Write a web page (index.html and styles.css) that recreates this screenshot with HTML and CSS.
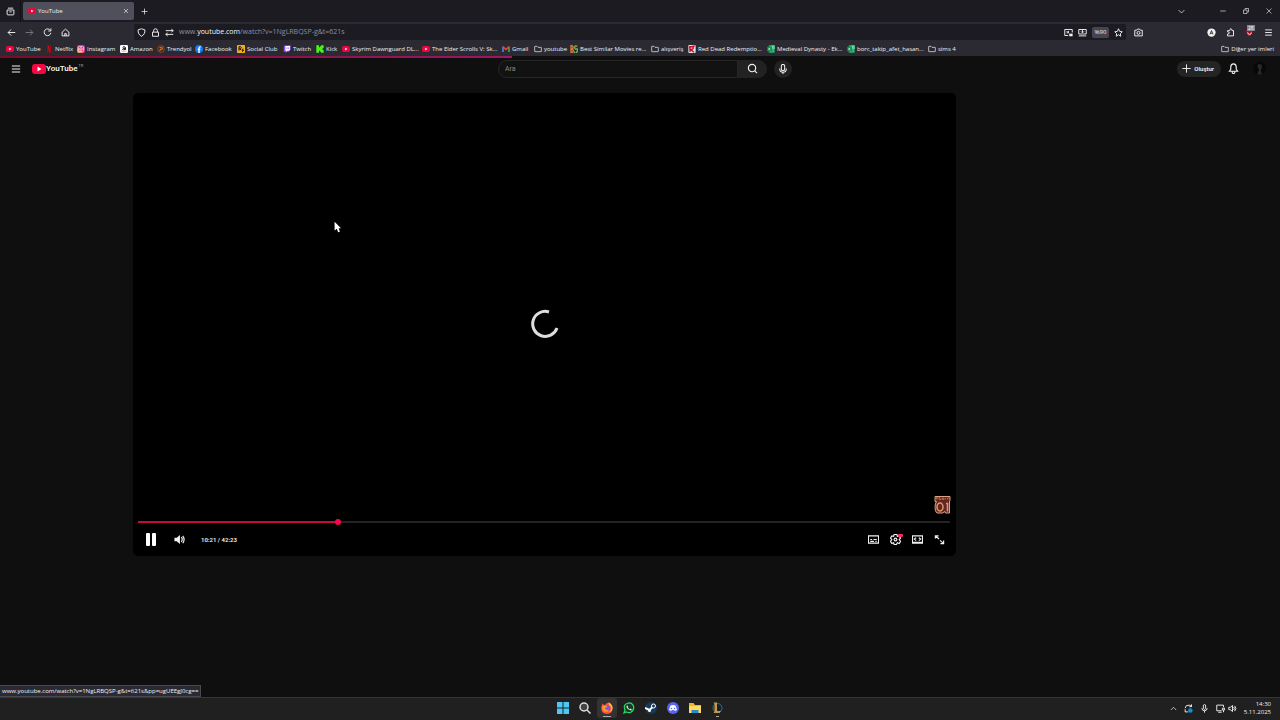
FILE: index.html
```html
<!DOCTYPE html>
<html lang="tr">
<head>
<meta charset="utf-8">
<title>YouTube</title>
<link rel="stylesheet" href="styles.css">
</head>
<body>
<svg class="sprite" aria-hidden="true">
  <symbol id="yt" viewBox="0 0 24 24"><rect y="3" width="24" height="18" rx="5" fill="#e4093c"/><path d="M9.500 8l7 4-7 4z" fill="#fff"/></symbol>
  <symbol id="folder" viewBox="0 0 24 24"><path d="M2 19V5q0-1 1-1h6l3 3h9q1 0 1 1v11q0 1-1 1H3q-1 0-1-1z" fill="none" stroke="#e8e8ee" stroke-width="2.200"/></symbol>
  <symbol id="sheet" viewBox="0 0 24 24"><rect x="5" y="1" width="18" height="22" rx="2" fill="#25b56f"/><path d="M14 1h9v11h-9z" fill="#58d99a"/><rect y="5" width="14" height="14" rx="1" fill="#087a42"/><path d="M4 8l6 8M10 8l-6 8" stroke="#fff" stroke-width="2"/></symbol>
</svg>
<div class="screen">
  <header class="browser">
    <div class="tabstrip">
      <button class="view" aria-label="Firefox View"><svg class="i9" viewBox="0 0 24 24"><path d="M3 8h18v11q0 2-2 2H5q-2 0-2-2zM5 3h14M9 13h6"/></svg></button>
      <div class="tab"><svg class="fav"><use href="#yt"/></svg><span>YouTube</span><button aria-label="Sekmeyi kapat"><svg class="i6" viewBox="0 0 24 24"><path d="M4 4l16 16M20 4L4 20"/></svg></button></div>
      <button class="plus" aria-label="Yeni sekme"><svg class="i7" viewBox="0 0 24 24"><path d="M12 2v20M2 12h20"/></svg></button>
      <div class="winctl">
        <button aria-label="Sekmeler"><svg class="i7" viewBox="0 0 24 24"><path d="M2 7l10 10L22 7"/></svg></button>
        <button aria-label="Küçült"><svg class="i6" viewBox="0 0 24 24"><path d="M1 12h22"/></svg></button>
        <button aria-label="Geri yükle"><svg class="i6" viewBox="0 0 24 24"><path d="M2 8h14v14H2zM8 7V2h14v14h-5"/></svg></button>
        <button aria-label="Kapat"><svg class="i6" viewBox="0 0 24 24"><path d="M2 2l20 20M22 2L2 22"/></svg></button>
      </div>
    </div>
    <div class="toolbar">
      <nav class="nav">
        <button aria-label="Geri"><svg class="i9" viewBox="0 0 24 24"><path d="M22 12H3M11 4l-8 8 8 8"/></svg></button>
        <button class="dim" aria-label="İleri"><svg class="i9" viewBox="0 0 24 24"><path d="M2 12h19M13 4l8 8-8 8"/></svg></button>
        <button aria-label="Yenile"><svg class="i9" viewBox="0 0 24 24"><path d="M20 7a9 9 0 1 0 1 6M21 1v7h-7"/></svg></button>
        <button aria-label="Ana sayfa"><svg class="i9" viewBox="0 0 24 24"><path d="M3 11l9-8 9 8v10H3zM10 21v-6h4v6"/></svg></button>
      </nav>
      <div class="urlbar">
        <svg class="i9" viewBox="0 0 24 24"><path d="M12 2l9 3q1 12-9 17Q2 17 3 5z"/></svg>
        <svg class="i9" viewBox="0 0 24 24"><path d="M4 11h16v11H4zM7 11V7q0-5 5-5t5 5v4"/></svg>
        <svg class="i9" viewBox="0 0 24 24"><path d="M2 7h20M2 17h20M17 3l5 4-5 4M7 13l-5 4 5 4"/></svg>
        <div class="url" role="textbox" aria-label="Adres">www.<b>youtube.com</b>/watch?v=1NgLRBQSP-g&amp;t=621s</div>
        <div class="urlacts">
        <button aria-label="Görüntü içinde görüntü"><svg class="i9" viewBox="0 0 24 24"><path d="M11 20H2V4h20v8M7 8l5 5M12 8v5H7"/><path class="fill" d="M14 15h9v7h-9z"/></svg></button>
        <button aria-label="Yükle"><svg class="i9" viewBox="0 0 24 24"><path d="M2 4h20v12H2zM2 21h20M12 4v8M8 9l4 4 4-4"/></svg></button>
        <button class="zoom">%90</button>
        <button aria-label="Yer imi"><svg class="i9" viewBox="0 0 24 24"><path d="M12 2l3 7 7 1-5 5 1 7-6-4-6 4 1-7-5-5 7-1z"/></svg></button>
        </div>
      </div>
      <button class="camera" aria-label="Ekran görüntüsü"><svg class="i9" viewBox="0 0 24 24"><path d="M2 6h5l2-3h6l2 3h5v15H2z"/><circle cx="12" cy="13" r="4"/></svg></button>
      <div class="ext">
        <button aria-label="Hesap"><svg class="i9" viewBox="0 0 24 24"><circle class="fill" cx="12" cy="12" r="11"/><path d="M8 17l4-10 4 10M10 14h4" class="dark"/></svg></button>
        <button aria-label="Uzantılar"><svg class="i9" viewBox="0 0 24 24"><path d="M4 21v-5q5 0 5-3t-5-3V7h6q0-5 3-5t3 5h4v14z"/></svg></button>
        <button class="blocker" aria-label="Engelleyici"><svg class="i9" viewBox="0 0 24 24"><path d="M3 4q9 0 9-3 0 3 9 3 0 14-9 19Q3 18 3 4z" fill="#b10f25" stroke="none"/><path d="M7 12q0 5 5 5t5-5"/></svg><span class="count">28</span></button>
        <button aria-label="Menü"><svg class="i9" viewBox="0 0 24 24"><path d="M3 5h18M3 12h18M3 19h18"/></svg></button>
      </div>
    </div>
    <nav class="bookmarks">
      <a href="#"><svg><use href="#yt"/></svg>YouTube</a>
      <a href="#"><svg viewBox="0 0 24 24"><path d="M6 1h5l7 22h-5z" fill="#e50914"/><path d="M6 1h4v22H6zM14 1h4v22h-4z" fill="#a00712"/></svg>Netflix</a>
      <a href="#"><svg viewBox="0 0 24 24"><defs><linearGradient id="ig" x1="0" y1="1" x2="1" y2="0"><stop offset="0" stop-color="#ffc43d"/><stop offset=".5" stop-color="#ed2b67"/><stop offset="1" stop-color="#8b37e8"/></linearGradient></defs><rect width="24" height="24" rx="6" fill="url(#ig)"/><g fill="none" stroke="#fff" stroke-width="2"><rect x="4" y="4" width="16" height="16" rx="4"/><circle cx="12" cy="12" r="4"/></g></svg>Instagram</a>
      <a href="#"><svg viewBox="0 0 24 24"><rect width="24" height="24" rx="4" fill="#fff"/><path d="M8 7q4-4 8 0v8M16 10q-8-1-8 3t8 0" fill="none" stroke="#111" stroke-width="3"/><path d="M4 18q8 5 16 0" fill="none" stroke="#f59b21" stroke-width="2"/></svg>Amazon</a>
      <a href="#"><svg viewBox="0 0 24 24"><circle cx="12" cy="12" r="10" fill="#32251f" stroke="#c55525" stroke-width="2"/><path d="M8 8h8v5H9v5" fill="none" stroke="#f27a1a" stroke-width="3"/></svg>Trendyol</a>
      <a href="#"><svg viewBox="0 0 24 24"><circle cx="12" cy="12" r="12" fill="#1478f2"/><path d="M17 6q-5-1-5 4v14M8 13h8" fill="none" stroke="#fff" stroke-width="4"/></svg>Facebook</a>
      <a href="#"><svg viewBox="0 0 24 24"><rect width="24" height="24" rx="2" fill="#f5ae17"/><path d="M6 17V5h5q4 3 0 6H7l6 4M18 11l-2 5h4l-5 4" fill="none" stroke="#161616" stroke-width="3"/></svg>Social Club</a>
      <a href="#"><svg viewBox="0 0 24 24"><path d="M5 1h18v14l-6 5h-5l-4 4v-4H2V6z" fill="#9146ff"/><path d="M7 3h14v11l-4 3h-5l-3 3v-3H7z" fill="#fff"/><path d="M12 7v5M17 7v5" stroke="#9146ff" stroke-width="2"/></svg>Twitch</a>
      <a href="#"><svg viewBox="0 0 24 24"><path d="M1 1h8v6h3V4h3V1h8v8h-3v6h3v8h-8v-3h-3v-3H9v6H1z" fill="#45f516"/></svg>Kick</a>
      <a href="#"><svg><use href="#yt"/></svg>Skyrim Dawnguard DL...</a>
      <a href="#"><svg><use href="#yt"/></svg>The Elder Scrolls V: Sk...</a>
      <a href="#"><svg viewBox="0 0 24 24"><path d="M3 21V5" stroke="#4285f4" stroke-width="5"/><path d="M21 21V5" stroke="#34a853" stroke-width="5"/><path d="M2 5l10 8 10-8" fill="none" stroke="#ea4335" stroke-width="5"/></svg>Gmail</a>
      <a href="#"><svg><use href="#folder"/></svg>youtube</a>
      <a href="#"><svg viewBox="0 0 24 24"><path d="M3 2v20h3q5-1 4-5t-6-5q7-1 5-6T3 2z" fill="none" stroke="#e8793e" stroke-width="4"/><path d="M22 4q-8-4-8 3t6 5 1 8-8 0" fill="none" stroke="#79b84d" stroke-width="4"/></svg>Best Similar Movies re...</a>
      <a href="#"><svg><use href="#folder"/></svg>alışveriş</a>
      <a href="#"><svg viewBox="0 0 24 24"><rect x="1" width="22" height="24" rx="3" fill="#e9dede"/><path d="M6 21V5h8q5 5-2 8H7l11 9M3 7l17-4" fill="none" stroke="#c30d35" stroke-width="4"/></svg>Red Dead Redemptio...</a>
      <a href="#"><svg><use href="#sheet"/></svg>Medieval Dynasty - Ek...</a>
      <a href="#"><svg><use href="#sheet"/></svg>borc_takip_afet_hasan...</a>
      <a href="#"><svg><use href="#folder"/></svg>sims 4</a>
      <a class="other" href="#"><svg><use href="#folder"/></svg>Diğer yer imleri</a>
    </nav>
  </header>
  <div class="loading"><div></div></div>
  <div class="masthead">
    <div class="brand">
      <button aria-label="Menü"><svg class="i10" viewBox="0 0 24 24"><path d="M2 5h20M2 12h20M2 19h20"/></svg></button>
      <a class="logo" href="#"><svg viewBox="0 0 28 20"><rect width="28" height="20" rx="6" fill="#f5083f"/><path d="M11 5l8 5-8 5z" fill="#fff"/></svg><b>YouTube</b><sup>TR</sup></a>
    </div>
    <form class="search">
      <input type="text" placeholder="Ara" aria-label="Ara">
      <button type="button" class="go" aria-label="Ara"><svg class="i11" viewBox="0 0 24 24"><circle cx="11" cy="11" r="8"/><path d="M17 17l5 5"/></svg></button>
      <button type="button" class="mic" aria-label="Sesle ara"><svg class="i10" viewBox="0 0 24 24"><path d="M8 5q0-4 4-4t4 4v7q0 4-4 4t-4-4zM4 11q0 9 8 9t8-9M12 20v4"/></svg></button>
    </form>
    <div class="account">
      <button class="create"><svg class="i9" viewBox="0 0 24 24"><path d="M12 1v22M1 12h22"/></svg>Oluştur</button>
      <button class="bell" aria-label="Bildirimler"><svg class="i11" viewBox="0 0 24 24"><path d="M3 18l3-4V9q0-7 6-7t6 7v5l3 4zM9 19q0 4 3 4t3-4"/></svg></button>
      <button aria-label="Profil"><svg class="avatar" viewBox="0 0 24 24"><circle cx="12" cy="12" r="12" fill="#080808"/><path d="M8 8q1-6 6-4 4 2 2 8l-2 3 3 8H8l3-9z" fill="#292929"/></svg></button>
    </div>
  </div>
  <main class="page">
    <section class="player">
      <div class="stage">
        <svg class="spinner" viewBox="0 0 30 30"><path d="M19 3A12.500 12.500 0 1 0 27 19"/></svg>
        <svg class="mark" viewBox="0 0 34 38"><path d="M2 3h30v8l-1 1v24h-8l-1-3-5 3H6q-4-3-4-11 0-8 3-12H2z" fill="#63271f" stroke="#dfa083" stroke-width="2"/><path d="M5 9V5h3v4M11 4v5h3V6M17 9V6h3v3zM23 9V6M27 9V6h3" stroke="#d99b7f" stroke-width="1"/><ellipse cx="12" cy="24" rx="6" ry="8" stroke="#dc9770" stroke-width="3"/><path d="M24 17h3v16" stroke="#dc9770" stroke-width="3"/></svg>
      </div>
      <input class="seek" type="range" min="0" max="2543" value="621" aria-label="Konum">
      <div class="controls">
        <button aria-label="Duraklat"><svg class="pause" viewBox="0 0 20 26"><rect width="8" height="26" rx="2"/><rect x="12" width="8" height="26" rx="2"/></svg></button>
        <button aria-label="Ses"><svg class="i11" viewBox="0 0 24 24"><path class="fill" d="M1 8h5l7-6v20l-7-6H1z"/><path d="M16 7q4 5 0 10M19 4q6 8 0 16"/></svg></button>
        <time>10:21 / 42:23</time>
        <div class="right">
          <button aria-label="Altyazılar"><svg class="i11" viewBox="0 0 24 24"><path d="M1 4h22v16H1zM5 12h4M12 12h7M5 16h8M16 16h3"/></svg></button>
          <button class="gear" aria-label="Ayarlar"><svg class="i11" viewBox="0 0 24 24"><path d="M9 1h6l1 4 4-1 3 5-3 3 3 4-3 5-4-2-2 4H9l-1-4-4 2-3-5 3-4-3-3 3-5 4 1z"/><circle cx="12" cy="12" r="3"/></svg><span class="hd"></span></button>
          <button aria-label="Sinema modu"><svg class="i11" viewBox="0 0 24 24"><path d="M1 4h22v16H1zM9 8l-4 3 4 3M15 8l4 3-4 3M1 18h22"/></svg></button>
          <button aria-label="Tam ekran"><svg class="i11" viewBox="0 0 24 24"><path d="M3 10V4h7M4 5l7 6M21 14v7h-7M20 20l-7-6"/></svg></button>
        </div>
      </div>
    </section>
    <div class="status">www.youtube.com/watch?v=1NgLRBQSP-g&amp;t=621s&amp;pp=ugUEEgJ0cg==</div>
    <svg class="cursor" viewBox="0 0 12 20"><path d="M1 1v15l4-3 2 6 3-1-2-6h4z" fill="#fff"/></svg>
  </main>
  <footer class="taskbar">
    <div class="apps">
      <button aria-label="Başlat"><svg viewBox="0 0 24 24"><path d="M0 0h11v11H0zM13 0h11v11H13zM0 13h11v11H0zM13 13h11v11H13z" fill="#4bc8f5"/></svg></button>
      <button aria-label="Arama"><svg viewBox="0 0 24 24"><circle cx="10" cy="10" r="8" fill="#444" stroke="#ddd" stroke-width="3"/><path d="M16 16l7 7" stroke="#ddd" stroke-width="3"/></svg></button>
      <button class="active" aria-label="Firefox"><svg viewBox="0 0 24 24"><path d="M1 9l2-6 4 4q4-6 9-6 1 4 4 6l2 1q4 15-10 16Q-1 24 1 9z" fill="#ff5138"/><path d="M15 1q0 5 4 7 4 8-4 12 9-1 8-10-1-5-4-7" fill="#ffc83b"/><circle cx="12" cy="13" r="6" fill="#8453df"/><path d="M3 8q6-3 10 2-5 0-5 3 2 4 8 3-4 6-10 3Q1 15 3 8z" fill="#ff9833"/></svg></button>
      <button aria-label="WhatsApp"><svg viewBox="0 0 24 24"><path d="M2 22l2-6Q0 6 8 3q9-4 13 5 2 9-6 13-4 1-8-1z" fill="#173b25" stroke="#27d867" stroke-width="2.500"/><path d="M8 7q-3 3 2 7t8 2l-3-3-2 2-4-5 1-2z" fill="#fff"/></svg></button>
      <button aria-label="Steam"><svg viewBox="0 0 24 24"><circle cx="12" cy="12" r="12" fill="#153957"/><path d="M0 12l9 4 6-6" fill="none" stroke="#fff" stroke-width="4"/><circle cx="17" cy="8" r="4" fill="#153957" stroke="#fff" stroke-width="2"/><circle cx="9" cy="17" r="3" fill="#fff"/></svg></button>
      <button aria-label="Discord"><svg viewBox="0 0 24 24"><circle cx="12" cy="12" r="12" fill="#5865f2"/><path d="M7 7q5-2 10 0l3 9-4 2-2-2h-4l-2 2-4-2z" fill="#fff"/><circle cx="9" cy="13" r="1.500" fill="#5865f2"/><circle cx="15" cy="13" r="1.500" fill="#5865f2"/></svg></button>
      <button aria-label="Dosyalar"><svg viewBox="0 0 24 24"><path d="M0 2h9l3 4h12v16H0z" fill="#efb51c"/><path d="M0 8h24v14H0z" fill="#ffda61"/><path d="M5 22v-6h14v6" fill="#278ac9"/></svg></button>
      <button class="running" aria-label="League of Legends"><svg viewBox="0 0 24 24"><circle cx="13" cy="12" r="9" fill="#10242a" stroke="#436c78" stroke-width="2"/><path d="M5 1h7v17h8l-3 4H5l2-3V4z" fill="#c49b4b"/></svg></button>
    </div>
    <div class="tray">
      <svg class="i7" viewBox="0 0 24 24"><path d="M3 17l9-9 9 9"/></svg>
      <svg class="i9" viewBox="0 0 24 24"><path d="M3 11q1-9 11-8l6 3M20 1v6h-6M3 14v7h8"/><circle cx="17" cy="17" r="6" fill="#168bd8" stroke="none"/></svg>
      <svg class="i9" viewBox="0 0 24 24"><path d="M9 3q3-3 6 0v9q-3 5-6 0zM5 11q0 7 7 7t7-7M12 18v5"/></svg>
      <svg class="i9" viewBox="0 0 24 24"><path d="M15 18H2V3h18v5M6 22h9M17 11h6v5h-6zM20 16v6"/></svg>
      <svg class="i9 vol" viewBox="0 0 24 24"><path d="M2 9h4l6-5v16l-6-5H2zM15 8q4 4 0 8M18 5q6 7 0 14"/></svg>
      <div class="clock"><time>14:30</time><time>5.11.2025</time></div>
    </div>
  </footer>
</div>
</body>
</html>
```
FILE: styles.css
```css
* { box-sizing: border-box; }
body { margin: 0; background: #0f0f0f; color: #f1f1f1; font-family: "Open Sans", "Noto Sans", sans-serif; font-size: 6px; line-height: 10px; }
button { border: 0; padding: 0; background: none; color: inherit; font: inherit; display: flex; align-items: center; justify-content: center; }
a { color: inherit; text-decoration: none; }
svg { display: block; flex: none; fill: none; stroke: currentColor; stroke-width: 2.5; }
.sprite { position: absolute; width: 0; height: 0; }
symbol, .fav, .bookmarks svg, .logo svg, .avatar, .cursor, .apps svg, .pause { stroke: none; }
.fill { fill: currentColor; stroke: none; }
.dark { stroke: #333; }
.i6 { width: 6px; height: 6px; }
.i7 { width: 7px; height: 7px; }
.i9 { width: 9px; height: 9px; }
.i10 { width: 10px; height: 10px; }
.i11 { width: 11px; height: 11px; }
.screen { min-height: 100vh; display: flex; flex-direction: column; }
.browser { background: #2b2a33; }

.tabstrip { height: 22px; display: flex; align-items: center; background: #1c1b22; }
.view { width: 21px; height: 22px; border-right: 1px solid #111116; }
.tab { width: 111px; height: 18px; margin-left: 2px; padding: 0 5px; display: flex; align-items: center; gap: 2px; background: #50505c; border-radius: 2px; }
.tab span { flex: 1; }
.fav { width: 8px; height: 8px; }
.plus { width: 20px; }
.winctl { margin-left: auto; display: flex; }
.winctl button { width: 23px; }
.winctl button:first-child { width: 20px; margin-right: 20px; }

.toolbar { height: 20px; display: flex; align-items: center; }
.nav { width: 134px; padding-left: 7px; display: flex; gap: 9px; }
.dim { color: #777681; }
.urlbar { flex: 1; height: 16px; padding: 0 3px; display: flex; align-items: center; gap: 5px; background: #1c1b22; border-radius: 2px; }
.url { flex: 1; color: #8f8f9b; font-size: 7px; line-height: 12px; }
.url b { color: #f5f5f8; font-weight: 400; }
.urlacts { display: flex; align-items: center; gap: 5px; }
.zoom { width: 17px; height: 11px; background: #454450; border-radius: 2px; }
.camera { width: 24px; }
.ext { width: 130px; padding-right: 7px; display: flex; justify-content: flex-end; gap: 10px; }
.blocker { position: relative; }
.count { position: absolute; left: 2px; top: -3px; padding: 0 1px; background: #858585; color: #fff; font-size: 5px; line-height: 6px; }

.bookmarks { height: 14px; padding: 0 6px; display: grid; grid-template-columns: 39px 32px 43px 37px 38px 42px 46px 33px 26px 80px 80px 32px 36px 81px 37px 79px 80px 81px 30px 1fr; align-items: center; white-space: nowrap; }
.bookmarks a { display: flex; align-items: center; gap: 2px; line-height: 8px; }
.bookmarks svg { width: 8px; height: 8px; }
.bookmarks .other { justify-content: flex-end; }

.loading { height: 2px; background: #0f0f0f; }
.loading div { width: 40%; height: 2px; background: linear-gradient(90deg, #7c0b27, #9d1766); }
.masthead { height: 21px; padding: 0 14px 0 11px; display: grid; grid-template-columns: 487fr 294px 474fr; align-items: center; }
.brand, .account { display: flex; align-items: center; }
.brand { gap: 11px; }
.logo { display: flex; align-items: center; }
.logo svg { width: 14px; height: 10px; }
.logo b { font-family: Roboto, sans-serif; font-size: 8px; font-weight: 600; }
.logo sup { align-self: flex-start; margin-left: 1px; font-size: 4px; line-height: 4px; color: #aaa; }
.search { display: flex; margin: 0; }
.search input { flex: 1; min-width: 0; height: 18px; padding: 0 6px; border: 1px solid #262626; border-radius: 9px 0 0 9px; background: #121212; color: #eee; font: 7px Roboto, sans-serif; }
.search input::placeholder { color: #888; }
.go { width: 29px; height: 18px; background: #222; border-radius: 0 9px 9px 0; }
.mic { width: 18px; height: 18px; margin-left: 7px; background: #222; border-radius: 50%; }
.account { justify-content: flex-end; }
.create { height: 16px; padding: 0 7px 0 5px; gap: 3px; background: #242424; border-radius: 8px; font: 600 6px Roboto, sans-serif; }
.bell { margin: 0 14px 0 7px; }
.avatar { width: 13px; height: 13px; }

.page { flex: 1; position: relative; padding: 14px 25.3% 0 133px; }
.player { background: #000; border-radius: 5px; }
.stage { position: relative; aspect-ratio: 823 / 425; display: flex; align-items: center; justify-content: center; }
.spinner { width: 30px; height: 30px; margin-top: 37px; stroke: #ddd; stroke-width: 3; }
.mark { position: absolute; right: 5px; bottom: 4px; width: 17px; height: 19px; }
.seek { appearance: none; display: block; width: calc(100% - 11px); height: 8px; margin: 0 5px; background: linear-gradient(90deg, #c8093d 24.5%, #242424 24.5%) center / 100% 2px no-repeat; }
.seek::-webkit-slider-thumb { appearance: none; width: 6px; height: 6px; border-radius: 50%; background: #f5084b; }
.controls { height: 30px; padding: 0 11px 3px 13px; display: flex; align-items: center; font: 600 6px Roboto, sans-serif; }
.pause { width: 10px; height: 13px; fill: #fff; }
.controls button + button { margin-left: 18px; }
.controls time { margin-left: 16px; }
.right { margin-left: auto; display: flex; }
.controls .right button + button { margin-left: 11px; }
.gear { position: relative; }
.hd { position: absolute; right: -2px; top: 0; width: 5px; height: 3px; background: #f42c62; border-radius: 1px; }
.status { position: absolute; left: 0; bottom: 0; padding: 0 2px; background: #2b2a33; border: 1px solid #484851; border-left: 0; }
.cursor { position: absolute; left: 334px; top: 142px; width: 7px; height: 12px; }

.taskbar { height: 23px; padding-bottom: 2px; display: grid; grid-template-columns: 1fr auto 1fr; align-items: center; background: #202020; border-top: 1px solid #363636; }
.apps { grid-column: 2; display: flex; gap: 2px; }
.apps button { position: relative; width: 20px; height: 20px; border-radius: 3px; }
.apps svg { width: 12px; height: 12px; }
.active { background: #333; }
.active::after, .running::after { content: ""; position: absolute; bottom: 1px; width: 8px; height: 1px; background: #aaa; }
.running::after { width: 3px; }
.tray { display: flex; align-items: center; justify-content: flex-end; gap: 7px; padding-right: 9px; }
.vol { margin-left: -4px; }
.clock { display: grid; text-align: right; line-height: 8px; }
```
